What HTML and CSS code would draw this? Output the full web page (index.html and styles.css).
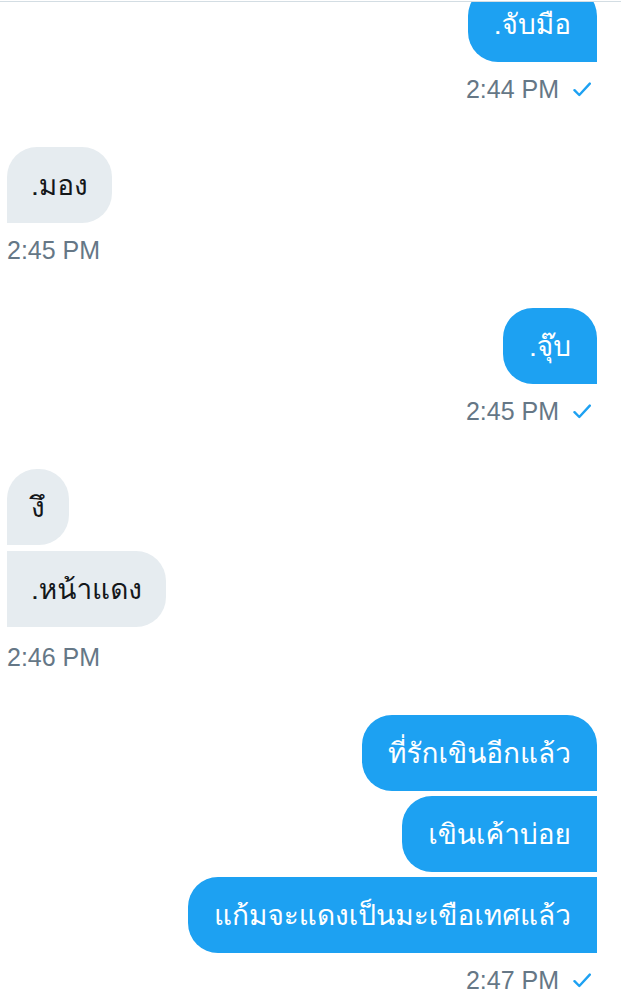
FILE: index.html
```html
<!DOCTYPE html>
<html lang="th">
<head>
<meta charset="utf-8">
<title>Messages</title>
<link rel="stylesheet" href="styles.css">
</head>
<body>
<div class="screen">
  <div class="header-line"></div>
  <div class="thread">
    <div class="thread-inner">
      <div class="group sent">
        <div class="bubble">.จับมือ</div>
        <div class="meta">2:44 PM<svg class="check" viewBox="0 0 18 15" width="18" height="15"><path d="M1.5 8.2 L6.3 13 L16.8 1.6" fill="none" stroke="#1da1f2" stroke-width="2.4" stroke-linecap="round" stroke-linejoin="round"/></svg></div>
      </div>

      <div class="group received">
        <div class="bubble">.มอง</div>
        <div class="meta">2:45 PM</div>
      </div>

      <div class="group sent">
        <div class="bubble">.จุ๊บ</div>
        <div class="meta">2:45 PM<svg class="check" viewBox="0 0 18 15" width="18" height="15"><path d="M1.5 8.2 L6.3 13 L16.8 1.6" fill="none" stroke="#1da1f2" stroke-width="2.4" stroke-linecap="round" stroke-linejoin="round"/></svg></div>
      </div>

      <div class="group received stack">
        <div class="bubble">งึ</div>
        <div class="bubble">.หน้าแดง</div>
        <div class="meta">2:46 PM</div>
      </div>

      <div class="group sent">
        <div class="bubble">ที่รักเขินอีกแล้ว</div>
        <div class="bubble">เขินเค้าบ่อย</div>
        <div class="bubble">แก้มจะแดงเป็นมะเขือเทศแล้ว</div>
        <div class="meta">2:47 PM<svg class="check" viewBox="0 0 18 15" width="18" height="15"><path d="M1.5 8.2 L6.3 13 L16.8 1.6" fill="none" stroke="#1da1f2" stroke-width="2.4" stroke-linecap="round" stroke-linejoin="round"/></svg></div>
      </div>
    </div>
  </div>
</div>
</body>
</html>
```

FILE: styles.css
```css
* { box-sizing: border-box; }

html, body {
  margin: 0;
  padding: 0;
  background: #ffffff;
}

body {
  font-family: "Loma", "Noto Sans Thai Looped", "Liberation Sans", sans-serif;
}

.screen {
  width: 621px;
  height: 1001px;
  overflow: hidden;
  display: flex;
  flex-direction: column;
}

.header-line {
  height: 1px;
  margin-top: 1px;
  background: #d3dde3;
  flex: none;
}

.thread {
  flex: 1;
  overflow: hidden;
}

.thread-inner {
  margin-top: -16px;
  display: flex;
  flex-direction: column;
  gap: 43px;
}

.group {
  display: flex;
  flex-direction: column;
  gap: 5px;
}

.group.sent {
  align-items: flex-end;
  padding-right: 24px;
}

.group.received {
  align-items: flex-start;
  padding-left: 7px;
}

.group.received.stack {
  gap: 6px;
}

.bubble {
  height: 76px;
  padding: 0 24px;
  display: flex;
  align-items: center;
  font-size: 28px;
  white-space: nowrap;
  border-radius: 30px;
}

.sent .bubble {
  padding: 0 26px;
  background: #1da1f2;
  color: #ffffff;
  border-top-right-radius: 0;
  border-bottom-right-radius: 0;
}

.sent .bubble:first-child {
  border-top-right-radius: 30px;
}

.received .bubble {
  background: #e6ecf0;
  color: #14171a;
  border-top-left-radius: 0;
  border-bottom-left-radius: 0;
}

.received .bubble:first-child {
  border-top-left-radius: 30px;
}

.meta {
  margin-top: 7px;
  display: flex;
  align-items: center;
  font-family: "Liberation Sans", Arial, sans-serif;
  font-size: 25px;
  line-height: 30px;
  color: #657786;
}

.stack .meta {
  margin-top: 9px;
}

.check {
  margin-left: 14px;
  margin-right: 6px;
  flex: none;
}
```
